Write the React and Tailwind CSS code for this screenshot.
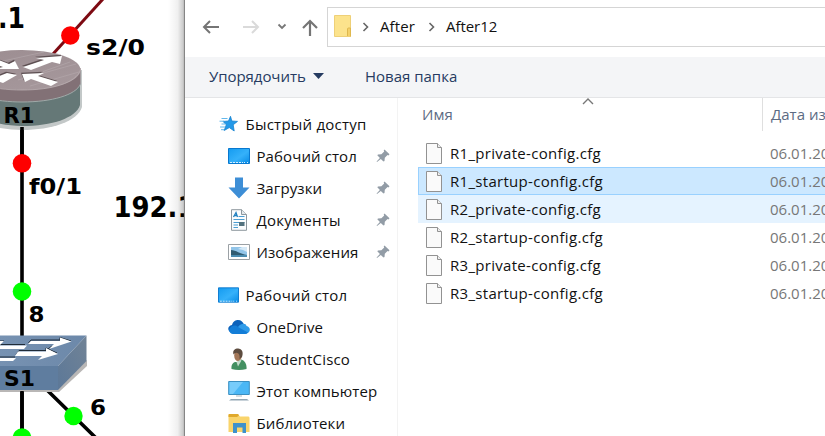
import React from "react";

function Topology() {
  return (
    <svg
      width="185"
      height="436"
      viewBox="0 0 185 436"
      className="block shrink-0 bg-white"
      fontFamily='"DejaVu Sans", Verdana, sans-serif'
      fontWeight="700"
    >
      <defs>
        <linearGradient id="edge">
          <stop offset="0" stopColor="#000" stopOpacity="0" />
          <stop offset="0.6" stopColor="#000" stopOpacity="0.06" />
          <stop offset="1" stopColor="#000" stopOpacity="0.23" />
        </linearGradient>
        <linearGradient id="top" x1="0" y1="0" x2="0.6" y2="1">
          <stop offset="0" stopColor="#9c8d91" />
          <stop offset="1" stopColor="#a5979b" />
        </linearGradient>
        <linearGradient id="swTop">
          <stop offset="0" stopColor="#7792b2" />
          <stop offset="1" stopColor="#6c88a9" />
        </linearGradient>
        <linearGradient id="swSide" x1="0" y1="1" x2="1" y2="0">
          <stop offset="0" stopColor="#5c7898" />
          <stop offset="1" stopColor="#718396" />
        </linearGradient>
      </defs>
      <path d="M53 54 L103 -1" stroke="#7d0a12" strokeWidth="3" />
      <path d="M22 120V337M22 388V436M46 389L97 439" stroke="#000" strokeWidth="3.6" />

      <path d="M-40 74V106C-30 124 0 130 22 130C52 130 78 121 82 107V70Z" fill="#c3c8c8" />
      <path d="M-38 72V100C-32 117 -4 126 22 126C52 126 76 118 80 105V72Z" fill="#657877" />
      <path d="M-38 70V84C-32 96 -4 102 22 102C52 102 76 95 80.500 84V68Z" fill="#827176" />
      <path d="M-38 84C-32 96 -4 102 22 102C52 102 76 95 80.500 84" fill="none" stroke="#9fa9a8" strokeWidth="1" />
      <ellipse cx="22" cy="70" rx="58.500" ry="20" fill="url(#top)" />
      <path d="M-38 70C-34 83 -8 90 22 90C52 90 76 83 80.500 70" fill="none" stroke="#baaeb1" strokeWidth="0.8" />
      <path d="M-6 63L44 52M18 80L76 64M30 86L79 72M36 74L70 62" stroke="#b5a9ac" strokeWidth="0.6" />
      <g fill="#5e5053" transform="translate(-1 -1.200)">
        <path d="M23 67L44 60L36 58L62 56L60 64L52 62L31 70Z" />
        <path d="M22 74L44 73L38 76L58 82L51 86L31 79L25 82Z" />
        <path d="M-4 59L9 64L15 61L19 69L-6 69L3 67L-8 63Z" />
        <path d="M-8 79L7 73L17 75L3 83Z" />
      </g>
      <g fill="#fff">
        <path d="M23 67L44 60L36 58L62 56L60 64L52 62L31 70Z" />
        <path d="M22 74L44 73L38 76L58 82L51 86L31 79L25 82Z" />
        <path d="M-4 59L9 64L15 61L19 69L-6 69L3 67L-8 63Z" />
        <path d="M-8 79L7 73L17 75L3 83Z" />
      </g>
      <path d="M22 127V165" stroke="#000" strokeWidth="3.6" />

      <path d="M0 392H59L87 366V360L58 388H0Z" fill="#b9b7b6" />
      <path d="M0 335.500H86.500L58 366H0Z" fill="url(#swTop)" />
      <path d="M0 366H58V390H0Z" fill="#5f7d9f" />
      <path d="M86.500 335.500V361L58 390V366Z" fill="url(#swSide)" />
      <g fill="none" stroke="#1f2b38" strokeWidth="1">
        <path d="M28.500 343L31 340H60V337.500L71 341" />
        <path d="M16 355L19 350.500H46V348L57 353" />
        <path d="M0 344.500H25M0 357H15M-2 341H4" />
        <path d="M52 346L48 349" />
      </g>
      <g fill="#fff">
        <path d="M28 344L31 341H60V337.500L71.500 341.500L49 349L54 344Z" />
        <path d="M15 356L18 351.500H46V348L58 354L38 360L42 356Z" />
        <path d="M0 345.500H27L24 349H0ZM0 341H4L0 345ZM0 358H16L13 361H0Z" />
      </g>
      <path d="M22 391V436" stroke="#000" strokeWidth="3.6" />

      <g fill="#fe0000">
        <circle cx="70.300" cy="35.500" r="9.200" />
        <circle cx="22" cy="163.300" r="9.300" />
      </g>
      <g fill="#00ff00">
        <circle cx="22" cy="291.500" r="9.300" />
        <circle cx="73.500" cy="416" r="9.200" />
        <circle cx="22" cy="437.500" r="9.300" />
      </g>

      <g fontSize="22">
        <text x="86" y="54.500" textLength="59" lengthAdjust="spacingAndGlyphs">s2/0</text>
        <text x="3.500" y="122.500" textLength="31" lengthAdjust="spacingAndGlyphs">R1</text>
        <text x="29" y="193.500" textLength="53" lengthAdjust="spacingAndGlyphs">f0/1</text>
        <text x="28.500" y="321.500" textLength="16" lengthAdjust="spacingAndGlyphs">8</text>
        <text x="4" y="386" textLength="31" lengthAdjust="spacingAndGlyphs">S1</text>
        <text x="90" y="415" textLength="16" lengthAdjust="spacingAndGlyphs">6</text>
      </g>
      <g fontSize="28">
        <text x="-2" y="28.200" textLength="27" lengthAdjust="spacingAndGlyphs">.1</text>
        <text x="113.500" y="216.500" textLength="82" lengthAdjust="spacingAndGlyphs">192.1</text>
      </g>
      <rect x="168" y="0" width="16" height="436" fill="url(#edge)" />
      <path d="M184.500 0V436" stroke="#858585" strokeWidth="1.200" />
    </svg>
  );
}

const Desktop = () => (
  <svg width="22" height="18" viewBox="0 0 22 18">
    <defs>
      <linearGradient id="desk" x1="0" y1="0" x2="1" y2="1">
        <stop offset="0" stopColor="#149bf0" />
        <stop offset="0.55" stopColor="#35b1fa" />
        <stop offset="1" stopColor="#078be6" />
      </linearGradient>
    </defs>
    <path d="M.5 1.500H21.500V16.500H.5Z" fill="url(#desk)" stroke="#0878cf" />
    <path d="M2 15.500H15M16 15.500H17M19 15.500H20" stroke="#d6efff" strokeWidth="1" strokeDasharray="2 1" />
  </svg>
);

const Star = () => (
  <svg width="20" height="18" viewBox="0 0 20 18">
    <path d="M11.500 1.300L12.800 6L18.500 6.400L14.200 9.800L15.200 16L10.300 12.600L5.200 15.500L7.300 9.800L4 6.400L9.500 6Z" fill="#2399e8" stroke="#1581cf" strokeWidth=".8" />
    <path d="M2.500 3.500H8.500M.5 6.200H5M2.500 9H6.500M1 12H6M2 14.700H5" stroke="#63b8ec" strokeWidth="1" />
  </svg>
);

const Download = () => (
  <svg width="22" height="22" viewBox="0 0 22 22">
    <path d="M7 .5H15V10.500H21.500L11 21.500L.5 10.500H7Z" fill="#3d8ed6" />
  </svg>
);

const Docs = () => (
  <svg width="22" height="22" viewBox="0 0 22 22">
    <path d="M3.500 .7H13.500L18.500 5.500V21.300H3.500Z" fill="#fbfcfd" stroke="#8e989e" />
    <path d="M13.500 .7V5.500H18.500" fill="#e4e9ec" stroke="#8e989e" />
    <path d="M5.500 8L8 3.500L9.500 8M6 6.500H9" fill="none" stroke="#2181c0" strokeWidth="1.300" />
    <path d="M10.500 7.500H16.500M5.500 10.500H16.500M5.500 13.500H16.500M5.500 16H10M5.500 18.500H10" stroke="#4b9dd1" strokeWidth="1.200" />
    <path d="M11 13H16.500V17H11Z" fill="#53727e" />
  </svg>
);

const Images = () => (
  <svg width="22" height="18" viewBox="0 0 22 18">
    <path d="M.5 1.500H21.500V16.500H.5Z" fill="#fff" stroke="#9ba1a5" />
    <path d="M3 4H19V14H3Z" fill="#92c5e9" />
    <path d="M10 6L15 7L19 9V4H14Z" fill="#d5e9f7" />
    <path d="M3 7C8 7 12 11 19 12V14H3Z" fill="#315c72" />
    <path d="M3 12H19V14H3Z" fill="#4b8cb0" />
  </svg>
);

const Cloud = () => (
  <svg width="22" height="16" viewBox="0 0 22 16">
    <path d="M4 6C5 2 8 1 10 1C13 1 15.500 3 16 6L8 14H4C-1 12 -1 7 4 6Z" fill="#0c62bb" />
    <path d="M10 8C13 4 18 4 18.500 7C23 8 23 14 18 14.500H8Z" fill="#2f9be9" />
    <path d="M1 11C2 7 7 5 10 8L20 13.500Q19 15 17 15H5Q2 15 1 11Z" fill="#137dd7" />
  </svg>
);

const User = () => (
  <svg width="22" height="22" viewBox="0 0 22 22">
    <ellipse cx="10" cy="7.500" rx="3.800" ry="5.500" fill="#a37758" />
    <path d="M5.500 6.500C4 2 8 .2 11 .7C14.500 1.200 15.500 5 14 9L11.500 11C12 7 11 5 8.500 4.800Q6.500 4.800 5.500 6.500Z" fill="#5d4c3f" />
    <path d="M3.500 21C3 15.500 6 13.500 9 14L13.500 11.500C17.500 13 19 17 18.500 21Q11 23 3.500 21Z" fill="#439061" />
    <path d="M8.500 14L10 18.500L13.500 12.500L12.500 12Z" fill="#c4dccb" />
  </svg>
);

const Computer = () => (
  <svg width="22" height="22" viewBox="0 0 22 22">
    <path d="M.7 1.500H21.300V14.500H.7Z" fill="#4bb7f5" stroke="#3b8fc1" />
    <path d="M1.500 2H15L5 14H1.500Z" fill="#77ccfb" />
    <path d="M8 15H14V17H8Z" fill="#d5dce0" />
    <path d="M1 20.500H21L19 19H3Z" fill="#91a6b3" />
  </svg>
);

const Library = () => (
  <svg width="22" height="22" viewBox="0 0 22 22">
    <path d="M.5 3Q.5 2 1.500 2H10L12 4.500H20.500Q21.500 4.500 21.500 6V20H.5Z" fill="#f9d46b" />
    <path d="M.5 5V3Q.5 2 1.500 2H10L11 3.500L9 5Z" fill="#e0a92c" />
    <path d="M5 11H18V21H14.500V15.500H9V21H5Z" fill="#3e91cb" />
  </svg>
);

const Pin = () => (
  <svg width="14" height="14" viewBox="0 0 14 14">
    <path d="M8.500 .5L13.500 5.300L12.500 6.500L11.500 6L8.800 8.800L8.500 12L7.500 12.500L4.800 9.900L1 13L.6 12.600L3.900 9L1.300 6.300L2 5.500L5.400 5.300L8.200 2.400L7.700 1.400Z" fill="#929ca6" />
  </svg>
);

const quick = [
  [Desktop, "Рабочий стол", "tracking-[0.1px]"],
  [Download, "Загрузки", "tracking-[0.12px]"],
  [Docs, "Документы", "tracking-[0.25px]"],
  [Images, "Изображения", "tracking-[0.1px]"],
];

const places = [
  [Cloud, "OneDrive", "tracking-[0.05px]"],
  [User, "StudentCisco", "tracking-[0.17px]"],
  [Computer, "Этот компьютер", "tracking-[0.08px]"],
  [Library, "Библиотеки", "tracking-[0.1px]"],
];

const files = [
  ["R1_private-config.cfg", "border-transparent"],
  ["R1_startup-config.cfg", "border-[#99d1ff] bg-[#cce8ff]"],
  ["R2_private-config.cfg", "border-transparent bg-[#e5f3ff] bg-clip-border"],
  ["R2_startup-config.cfg", "border-transparent"],
  ["R3_private-config.cfg", "border-transparent"],
  ["R3_startup-config.cfg", "border-transparent"],
];

function TreeRow({ Icon, label, tracking, pinned, root }) {
  return (
    <div className={`flex h-8 items-center ${root ? "pl-[33px]" : "pl-[43px]"}`}>
      <span className={`flex shrink-0 items-center justify-center ${root ? "w-[21px]" : "w-[22px]"}`}><Icon /></span>
      <span className={`ml-[6.500px] whitespace-nowrap ${tracking}`}>{label}</span>
      {pinned && <span className="mr-[7px] ml-auto"><Pin /></span>}
    </div>
  );
}

function Chevron() {
  return (
    <svg width="8" height="10" viewBox="0 0 8 10" className="shrink-0">
      <path d="M1.500 1L5.500 5L1.500 9" fill="none" stroke="#666" strokeWidth="1.600" />
    </svg>
  );
}

export default function App() {
  return (
    <div className="flex h-[436px] w-[825px] overflow-hidden bg-white font-['Open_Sans','Noto_Sans',sans-serif] text-[15px] leading-5 text-[#111]">
      <Topology />
      <main className="flex w-[640px] flex-col overflow-hidden bg-white">
        <nav className="flex h-[57px] shrink-0 items-start pt-[7px]">
          <svg width="142" height="40" viewBox="0 0 142 40" fill="none" className="shrink-0">
            <path d="M34 20H19M25 14L19 20L25 26" stroke="#757575" strokeWidth="2" />
            <path d="M58 20H73M67 14L73 20L67 26" stroke="#dadada" strokeWidth="2" />
            <path d="M93.500 17.500L97 21L100.500 17.500" stroke="#777" strokeWidth="1.800" />
            <path d="M125 29V14M118 21L125 14L132 21" stroke="#757575" strokeWidth="2.200" />
          </svg>
          <div className="flex h-10 flex-1 items-center border border-r-0 border-[#d5d5d5] pb-[2px] pl-[6px]">
            <svg width="17" height="22" viewBox="0 0 17 22" className="shrink-0">
              <path d="M.5 .5H16.500V21.500H.5Z" fill="#fce38c" stroke="#eed078" />
              <path d="M13.500 21V14Q13.500 13 14.500 13H16.500V21.500" fill="#f4d16a" stroke="#dfb84e" />
            </svg>
            <span className="mt-[2px] ml-[11px] flex"><Chevron /></span>
            <span className="ml-[10px] w-[36px] tracking-[0.1px]">After</span>
            <span className="mt-[2px] ml-[12px] flex"><Chevron /></span>
            <span className="ml-[10px] tracking-[-0.05px]">After12</span>
          </div>
        </nav>
        <div className="flex h-[41px] shrink-0 items-center border-b border-[#e4e5e7] bg-[#f4f5f7] pb-[3px] text-[#263b61]">
          <span className="ml-6 w-[97px] whitespace-nowrap tracking-[-0.05px]">Упорядочить</span>
          <svg width="11" height="6" viewBox="0 0 11 6" className="ml-[7px]"><path d="M0 0H11L5.500 6Z" fill="#263b61" /></svg>
          <span className="ml-[41px] whitespace-nowrap">Новая папка</span>
        </div>
        <div className="flex min-h-0 flex-1">
          <aside className="w-[213px] shrink-0 border-r border-[#f3f3f3] pt-[10px]">
            <TreeRow root Icon={Star} label="Быстрый доступ" tracking="tracking-[0.24px]" />
            {quick.map(([Icon, label, tracking]) => <TreeRow key={label} Icon={Icon} label={label} tracking={tracking} pinned />)}
            <div className="h-[11px]" />
            <TreeRow root Icon={Desktop} label="Рабочий стол" tracking="tracking-[0.22px]" />
            {places.map(([Icon, label, tracking]) => <TreeRow key={label} Icon={Icon} label={label} tracking={tracking} />)}
          </aside>
          <section className="flex-1 overflow-hidden">
            <div className="relative flex h-[33px] items-center text-[#5c6b83]">
              <span className="w-[364px] shrink-0 pb-[2px] pl-6">Имя</span>
              <span className="h-full shrink-0 border-l border-[#dfdfdf] pt-[6px] pl-2 whitespace-nowrap">Дата из</span>
              <svg width="12" height="7" viewBox="0 0 12 7" className="absolute top-0 left-[184px]"><path d="M1 6L6 1L11 6" fill="none" stroke="#777" strokeWidth="1.400" /></svg>
            </div>
            <ul className="pt-2 pl-5">
              {files.map(([name, state]) => (
                <li key={name} className={`flex h-7 items-center border border-r-0 pl-[7px] ${state}`}>
                  <svg width="16" height="21" viewBox="0 0 16 21" className="shrink-0">
                    <path d="M.5 .5H11.500L15.500 4.500V20.500H.5Z" fill="#fafafa" stroke="#929292" />
                    <path d="M11.500 .5V4.500H15.500" fill="#eee" stroke="#929292" />
                  </svg>
                  <span className="ml-2 w-[320px] shrink-0 tracking-[0.3px] whitespace-nowrap">{name}</span>
                  <span className="whitespace-nowrap text-[#777]">06.01.20</span>
                </li>
              ))}
            </ul>
          </section>
        </div>
      </main>
    </div>
  );
}
